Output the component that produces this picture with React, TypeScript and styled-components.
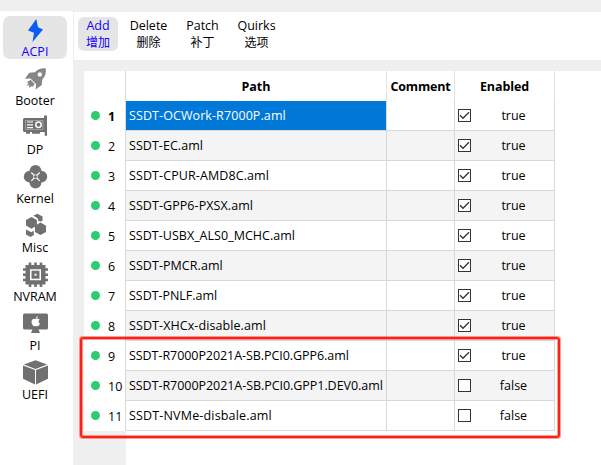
import React from 'react';
import styled, { createGlobalStyle } from 'styled-components';
import { FaApple } from 'react-icons/fa';

const GlobalStyle = createGlobalStyle`
  * { box-sizing: border-box; }
  body {
    margin: 0;
    overflow: hidden;
    background: #efefef;
    color: #000;
    font-family: 'Open Sans', 'Noto Sans CJK SC', sans-serif;
    font-size: 12.5px;
  }
`;

const Window = styled.div`
  display: flex;
  width: 601px;
  height: 465px;
  padding-top: 11px;
  background: #efefef;
`;

const Sidebar = styled.nav`
  display: flex;
  flex-direction: column;
  gap: 6px;
  width: 73px;
  padding: 5px 6px 0 3px;
  background: #fff;
`;

const NavItem = styled.div<{ $active?: boolean }>`
  display: flex;
  flex-direction: column;
  align-items: center;
  flex: none;
  width: 64px;
  height: 43px;
  padding-top: 1px;
  border-radius: 7px;
  background: ${(p) => (p.$active ? '#e5e5e5' : 'transparent')};
  color: ${(p) => (p.$active ? '#1400ff' : '#000')};
`;

const NavLabel = styled.span`
  line-height: 18px;
  white-space: nowrap;
`;

const NavIcon = styled.svg`
  flex: none;
  width: 26px;
  height: 26px;
  fill: #707070;
`;

const Main = styled.main`
  display: flex;
  flex-direction: column;
  flex: 1;
  min-width: 0;
  padding-top: 1px;
`;

const Toolbar = styled.header`
  display: flex;
  flex: none;
  height: 48px;
  padding: 5px 0 0 4px;
  margin-left: 1px;
  background: #fff;
`;

const Tool = styled.div<{ $width: number; $active?: boolean }>`
  width: ${(p) => p.$width}px;
  height: 34px;
  margin-right: 7px;
  border-radius: 6px;
  line-height: 17px;
  text-align: center;
  background: ${(p) => (p.$active ? '#e5e5e5' : 'transparent')};
  color: ${(p) => (p.$active ? '#1400ff' : '#000')};
`;

const ToolNative = styled.div`
  margin-top: -1px;
  font-family: 'Noto Sans CJK SC', sans-serif;
  font-size: 12px;
`;

const Content = styled.section`
  display: flex;
  flex: 1;
  margin-top: 11px;
  padding-left: 11px;
`;

const RowHeads = styled.div`
  flex: none;
  width: 42px;
  height: 360px;
  padding-top: 30px;
  border-right: 1px solid #d8d8d8;
  background: #fff;
`;

const RowHead = styled.div<{ $bold?: boolean }>`
  display: flex;
  align-items: center;
  height: 30px;
  padding-left: 7px;
  font-weight: ${(p) => (p.$bold ? 700 : 400)};
`;

const Dot = styled.i`
  width: 9px;
  height: 9px;
  margin: 0 8px 1px 0;
  border-radius: 50%;
  background: #2ecc71;
`;

const RowNumber = styled.span`
  line-height: 16px;
  padding-top: 1px;
`;

const Sheet = styled.div`
  flex: 1;
  background: #fff;
`;

const Row = styled.div`
  display: grid;
  grid-template-columns: 261px 68px 100px;
  width: 429px;
  height: 30px;
`;

const HeadCell = styled.div<{ $spacing?: number }>`
  border-right: 1px solid #e3e3e3;
  font-weight: 700;
  line-height: 31px;
  text-align: center;
  white-space: nowrap;
  letter-spacing: ${(p) => p.$spacing ?? 0}px;
`;

const Cell = styled.div<{ $alt: boolean; $selected?: boolean; $spacing?: number }>`
  display: flex;
  align-items: center;
  overflow: hidden;
  border-right: 1px solid #d8d8d8;
  border-bottom: 1px solid #d8d8d8;
  white-space: nowrap;
  line-height: 18px;
  background: ${(p) => (p.$selected ? '#0078d7' : p.$alt ? '#f4f4f4' : '#fff')};
  color: ${(p) => (p.$selected ? '#fff' : '#000')};
  letter-spacing: ${(p) => p.$spacing ?? 0}px;
  &:first-child { padding-left: 3px; }
`;

const Check = styled.svg`
  flex: none;
  width: 13px;
  height: 13px;
  margin-left: 3px;
  fill: #fff;
  stroke: #333;
`;

const Value = styled.span`
  flex: 1;
  padding-left: 2px;
  text-align: center;
`;

const Highlight = styled.div`
  position: absolute;
  left: 80px;
  top: 337px;
  width: 480px;
  height: 101px;
  border: 2px solid #ff2015;
  border-radius: 3px;
  box-shadow: 0 0 0 1px #ff201570, inset 0 0 0 1px #ff201570;
`;

const icons: Record<string, React.ReactNode> = {
  ACPI: <path fill="#0a5cf5" d="M14.3 2 6 13.4l6 2.4L10.5 25 21 12.4l-5-2.2Z" />,
  Booter: (
    <g fill="#868686">
      <path
        fillRule="evenodd"
        d="M23.7 2.3C19 2 15.5 3.3 13 6.2L7.2 6.8 3 12.7l5.5-.3 5.5 5.5-.3 5.5L19.800 19l.5-5.500c3.200-3 4-6.700 3.400-11.200ZM17.800 6.200a2.200 2.200 0 1 1 0 4.400 2.200 2.200 0 0 1 0-4.400Z"
      />
      <path d="m8.5 13.8-3.8 2.7 1.9.2-1.9 3.200 2.600-.9-.2 3 3.300-2.300.3 1.600 1.900-3.300Z" />
    </g>
  ),
  DP: (
    <>
      <path d="M1 4.500A1.500 1.500 0 0 1 2.500 3H22V.5h3v20.300h-2.300V17H18v1.700h-8V17H8v1.700H4V17H2.500A1.500 1.500 0 0 1 1 15.500Z" />
      <rect x="3.5" y="5.5" width="17.5" height="9" fill="none" stroke="#bbb" strokeWidth=".6" />
      <path d="M5 7h6M5 9.800h6M5 12.600h6" stroke="#fff" strokeWidth="1.2" />
      <circle cx="16.5" cy="9.8" r="2.7" fill="none" stroke="#fff" strokeWidth="1.5" />
    </>
  ),
  Kernel: (
    <>
      <circle cx="13.5" cy="6.9" r="5.9" />
      <circle cx="7.7" cy="12.7" r="5.9" />
      <circle cx="19.3" cy="12.7" r="5.9" />
      <circle cx="13.5" cy="18.5" r="5.9" />
      <path d="m9.300 8.500 8.400 8.400m0-8.400-8.400 8.400" stroke="#fff" strokeWidth="1.2" />
      <circle cx="13.5" cy="12.7" r="1.9" fill="#707070" stroke="#fff" strokeWidth=".7" />
    </>
  ),
  Misc: (
    <>
      <path d="m9.500 4 5.400 3v5.500l-5.400 3.200-5.500-3.200V7Z" />
      <path d="m18.500 9.400 5.500 3.300v6.200L18.500 22 13 18.900v-6.200Z" />
      <path d="m11.500 2.600 4-1.900L20.500 3.500v4.500l-2.500.4-2-1V5.700Z" />
      <path d="m4 16.400 5.300 2.800 2.500-1.500v4.300L8.500 24 4 21.400Z" />
    </>
  ),
  NVRAM: (
    <>
      <path d="M8 .5v5M13.500.5v5M19 .5v5M8 20v5M13.500 20v5M19 20v5M1 7.500h5M1 12.700h5M1 18h5M21 7.500h5M21 12.700h5M21 18h5" stroke="#707070" strokeWidth="2.6" />
      <path fillRule="evenodd" d="M3.500 3h20v19.500h-20ZM8 7.200v11h11v-11Z" />
      <path d="M9.500 8.700h8v8h-8Z" />
      <path d="M12.500 11.700h2v2h-2Z" fill="#fff" />
    </>
  ),
  PI: (
    <>
      <path d="M2.500 2.500h22A1.500 1.500 0 0 1 26 4v13a1.500 1.500 0 0 1-1.500 1.500h-8l1.500 3.500h-9l1.500-3.500h-8A1.500 1.500 0 0 1 1 17V4a1.500 1.500 0 0 1 1.500-1.500Z" />
      <FaApple x="8" y="4.500" size={11.5} color="#fff" fill="#fff" />
    </>
  ),
  UEFI: (
    <>
      <path d="m13.500.2 11.700 4.200-11.700 4.700L1.800 4.400Z" />
      <path d="m1 5.400 12 4.700v14.300L1 18.700Z" />
      <path d="m26 5.400-12 4.700v14.300l12-5.700Z" />
    </>
  ),
};

const sections = ['ACPI', 'Booter', 'DP', 'Kernel', 'Misc', 'NVRAM', 'PI', 'UEFI'];

const tools = [
  { name: 'Add', native: '增加', width: 40 },
  { name: 'Delete', native: '删除', width: 47 },
  { name: 'Patch', native: '补丁', width: 47 },
  { name: 'Quirks', native: '选项', width: 47 },
];

const tables = [
  { path: 'SSDT-OCWork-R7000P.aml', enabled: true, spacing: 0.09 },
  { path: 'SSDT-EC.aml', enabled: true, spacing: 0.05 },
  { path: 'SSDT-CPUR-AMD8C.aml', enabled: true, spacing: 0.1 },
  { path: 'SSDT-GPP6-PXSX.aml', enabled: true, spacing: 0.07 },
  { path: 'SSDT-USBX_ALS0_MCHC.aml', enabled: true, spacing: 0.02 },
  { path: 'SSDT-PMCR.aml', enabled: true, spacing: 0.06 },
  { path: 'SSDT-PNLF.aml', enabled: true, spacing: -0.04 },
  { path: 'SSDT-XHCx-disable.aml', enabled: true, spacing: 0.09 },
  { path: 'SSDT-R7000P2021A-SB.PCI0.GPP6.aml', enabled: true, spacing: -0.06 },
  { path: 'SSDT-R7000P2021A-SB.PCI0.GPP1.DEV0.aml', enabled: false, spacing: -0.05 },
  { path: 'SSDT-NVMe-disbale.aml', enabled: false, spacing: 0.17 },
];

export default function App() {
  return (
    <>
      <GlobalStyle />
      <Window>
        <Sidebar>
          {sections.map((name, i) => (
            <NavItem key={name} $active={i === 0}>
              <NavIcon viewBox="0 0 26 26">{icons[name]}</NavIcon>
              <NavLabel>{name}</NavLabel>
            </NavItem>
          ))}
        </Sidebar>
        <Main>
          <Toolbar>
            {tools.map((tool, i) => (
              <Tool key={tool.name} $width={tool.width} $active={i === 0}>
                {tool.name}
                <ToolNative>{tool.native}</ToolNative>
              </Tool>
            ))}
          </Toolbar>
          <Content>
            <RowHeads>
              {tables.map((t, i) => (
                <RowHead key={t.path} $bold={i === 0}>
                  <Dot />
                  <RowNumber>{i + 1}</RowNumber>
                </RowHead>
              ))}
            </RowHeads>
            <Sheet>
              <Row>
                <HeadCell>Path</HeadCell>
                <HeadCell $spacing={-0.15}>Comment</HeadCell>
                <HeadCell $spacing={-0.1}>Enabled</HeadCell>
              </Row>
              {tables.map((t, i) => (
                <Row key={t.path}>
                  <Cell $alt={i % 2 === 1} $selected={i === 0} $spacing={t.spacing}>{t.path}</Cell>
                  <Cell $alt={i % 2 === 1} />
                  <Cell $alt={i % 2 === 1}>
                    <Check viewBox="0 0 13 13">
                      <rect x=".5" y=".5" width="12" height="12" />
                      {t.enabled && <path d="m2 6.300 3 3L11 3.300" fill="none" strokeWidth="1.3" />}
                    </Check>
                    <Value>{String(t.enabled)}</Value>
                  </Cell>
                </Row>
              ))}
            </Sheet>
          </Content>
        </Main>
      </Window>
      <Highlight />
    </>
  );
}
